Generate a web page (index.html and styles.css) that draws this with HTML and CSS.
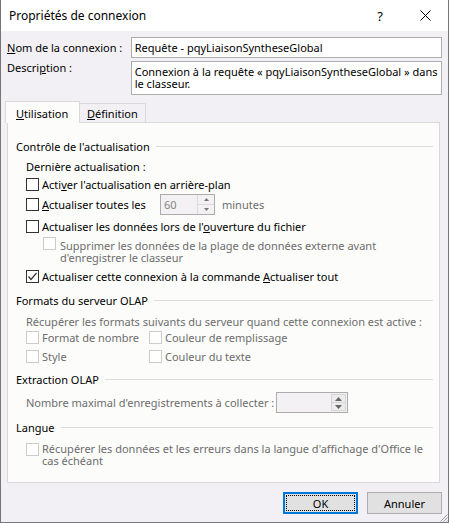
FILE: index.html
```html
<!DOCTYPE html>
<html lang="fr">
<head>
<meta charset="utf-8">
<title>Propriétés de connexion</title>
<link rel="stylesheet" href="styles.css">
</head>
<body>
<div class="window">
  <div class="titlebar">
    <span class="title">Propriétés de connexion</span>
    <span class="help">?</span>
    <span class="close"><svg width="11" height="11" viewBox="0 0 11 11"><path d="M0.5 0.5L10.5 10.5M10.5 0.5L0.5 10.5" stroke="#000" stroke-width="1" fill="none"/></svg></span>
  </div>
  <div class="content">
    <div class="field">
      <span class="flabel"><u>N</u>om de la connexion :</span>
      <div class="input">Requête - pqyLiaisonSyntheseGlobal</div>
    </div>
    <div class="field desc">
      <span class="flabel">Descri<u>p</u>tion :</span>
      <div class="input textarea">Connexion à la requête « pqyLiaisonSyntheseGlobal » dans<br>le classeur.</div>
    </div>
    <div class="tabs">
      <div class="tab active"><u>U</u>tilisation</div>
      <div class="tab inactive"><u>D</u>éfinition</div>
    </div>
    <div class="panel">
      <div class="group-title">Contrôle de l'actualisation</div>
      <div class="sub">Dernière actualisation :</div>
      <div class="cb-row r1"><span class="cb"></span><span>Acti<u>v</u>er l'actualisation en arrière-plan</span></div>
      <div class="cb-row r2"><span class="cb"></span><span class="w-toutes"><u>A</u>ctualiser toutes les</span>
        <div class="spin s60"><span class="spin-val">60</span><span class="spin-btns"><span><svg width="5" height="3" viewBox="0 0 5 3"><path d="M0 3L2.5 0L5 3Z" fill="#777"/></svg></span><span><svg width="5" height="3" viewBox="0 0 5 3"><path d="M0 0L2.5 3L5 0Z" fill="#777"/></svg></span></span></div>
        <span class="dim unit">minutes</span></div>
      <div class="cb-row r3"><span class="cb"></span><span>Actualiser les données lors de l'<u>o</u>uverture du fichier</span></div>
      <div class="cb-row multi r4"><span class="cb disabled"></span><span class="dim mtext">Supprimer les données de la plage de données externe avant<br>d'enregistrer le classeur</span></div>
      <div class="cb-row r5"><span class="cb"><svg width="11" height="11" viewBox="0 0 11 11"><path d="M1.5 5.5L4 8.5L9.5 2" stroke="#333" stroke-width="1.2" fill="none"/></svg></span><span>Actualiser cette connexion à la commande <u>A</u>ctualiser tout</span></div>

      <div class="group-title g2">Formats du serveur OLAP</div>
      <div class="sub dim olap-text">Récupérer les formats suivants du serveur quand cette connexion est active :</div>
      <div class="olap-grid">
        <div class="cb-row"><span class="cb disabled"></span><span class="dim">Format de nombre</span></div>
        <div class="cb-row"><span class="cb disabled"></span><span class="dim">Couleur de remplissage</span></div>
        <div class="cb-row o2"><span class="cb disabled"></span><span class="dim">Style</span></div>
        <div class="cb-row o2"><span class="cb disabled"></span><span class="dim">Couleur du texte</span></div>
      </div>

      <div class="group-title g3">Extraction OLAP</div>
      <div class="max-row">
        <span class="dim w-max">Nombre maximal d'enregistrements à collecter :</span>
        <div class="spin s-max"><span class="spin-val"></span><span class="spin-btns framed"><span><svg width="7" height="4" viewBox="0 0 7 4"><path d="M0 4L3.5 0L7 4Z" fill="#666"/></svg></span><span><svg width="7" height="4" viewBox="0 0 7 4"><path d="M0 0L3.5 4L7 0Z" fill="#666"/></svg></span></span></div>
      </div>

      <div class="group-title g4">Langue</div>
      <div class="cb-row multi lang"><span class="cb disabled"></span><span class="dim">Récupérer les données et les erreurs dans la langue d'affichage d'Office le<br>cas échéant</span></div>
    </div>
    <div class="buttons">
      <button class="btn default"><span class="focus">OK</span></button>
      <button class="btn">Annuler</button>
    </div>
  </div>
  <svg class="grip" width="9" height="9" viewBox="0 0 9 9"><path d="M8.5 1.5L1.5 8.5M8.5 4.5L4.5 8.5M8.5 7.5L7.5 8.5" stroke="#9a9a9a" stroke-width="1" fill="none"/></svg>
</div>
</body>
</html>
```
FILE: styles.css
```css
* { box-sizing: border-box; }
html, body { margin: 0; padding: 0; background: #f2f0f4; }
body {
  font-family: "Noto Sans", "Liberation Sans", sans-serif;
  font-size: 11px;
  color: #000;
}
u { text-decoration: underline; text-underline-offset: 1px; }

.window {
  position: relative;
  width: 449px;
  height: 523px;
  background: #f2f0f4;
  border: 1px solid #767676;
  border-top: none;
}

.titlebar {
  height: 31px;
  background: #fff;
  display: flex;
  align-items: center;
  font-size: 12px;
}
.title { flex: 1; padding-left: 8px; line-height: 16px; }
.help { width: 12px; text-align: center; margin-right: 34px; font-size: 13px; }
.close { width: 11px; height: 11px; margin-right: 17px; display: flex; }

.content { padding: 6px 6px 0 6px; }

.field { display: flex; align-items: center; }
.flabel { width: 124px; line-height: 15px; white-space: nowrap; }
.input {
  width: 312px;
  height: 21px;
  border: 1px solid #adadad;
  background: #fff;
  padding: 0 3px;
  line-height: 19px;
  white-space: nowrap;
}
.desc { margin-top: 3px; align-items: flex-start; }
.desc .flabel { line-height: 14px; }
.textarea { height: 34px; line-height: 12px; padding-top: 4px; }

.tabs {
  display: flex;
  align-items: flex-end;
  height: 21px;
  margin: 6px 0 0 -2px;
}
.tab {
  position: relative;
  border: 1px solid #d9d9d9;
  border-bottom: none;
  line-height: 15px;
  white-space: nowrap;
}
.tab.active {
  width: 75px;
  height: 22px;
  margin-bottom: -1px;
  padding: 4px 0 0 10px;
  background: #fcfcfb;
  z-index: 1;
}
.tab.inactive {
  width: 67px;
  height: 19px;
  margin-left: -1px;
  padding: 2px 0 0 7px;
  background: #f2f0f4;
}

.panel {
  width: 433px;
  height: 361px;
  border: 1px solid #d9d9d9;
  background: #fcfcfb;
  padding: 16px 6px 0 8px;
}

.group-title {
  display: flex;
  align-items: center;
  height: 15px;
  line-height: 15px;
  white-space: nowrap;
}
.group-title::after {
  content: "";
  flex: 1;
  height: 1px;
  background: #dcdcdc;
  margin-left: 6px;
}
.g2 { margin-top: 8px; }
.g3 { margin-top: 7px; }
.g4 { margin-top: 7px; }

.sub { margin: 5px 0 0 10px; height: 15px; line-height: 15px; white-space: nowrap; }
.olap-text { margin-top: 6px; }

.dim { color: #6d6d6d; }

.cb-row {
  display: flex;
  align-items: center;
  height: 17px;
  line-height: 15px;
  margin-left: 10px;
  white-space: nowrap;
}
.cb {
  flex: none;
  width: 13px;
  height: 13px;
  border: 1px solid #333;
  background: #fff;
  margin-right: 3px;
  display: flex;
}
.cb.disabled { border-color: #cccccc; }

.r1 { margin-top: 2px; }
.r2 { margin-top: 1px; height: 21px; }
.r3 { margin-top: 3px; }
.r4 { margin-top: 2px; margin-left: 27px; }
.r4 .cb { margin-right: 4px; }
.r5 { margin-top: 4px; }

.cb-row.multi { height: auto; align-items: flex-start; line-height: 12px; }
.mtext { padding-top: 3px; }
.lang { margin-top: 8px; }

.w-toutes { width: 118px; }
.unit { margin-left: 7px; }

.spin {
  display: flex;
  height: 21px;
  border: 1px solid #acacac;
  background: #f3f1f4;
}
.s60 { width: 55px; }
.s-max { width: 72px; }
.spin-val { flex: 1; padding-left: 3px; line-height: 19px; color: #858585; }
.spin-btns {
  width: 17px;
  display: flex;
  flex-direction: column;
  border-left: 1px solid #dcdcdc;
}
.spin-btns span {
  flex: 1;
  display: flex;
  align-items: center;
  justify-content: center;
}
.spin-btns span + span { border-top: 1px solid #dcdcdc; }
.spin-btns.framed { width: 17px; padding: 1px; border-left: none; }
.spin-btns.framed span { background: #ececec; border: 1px solid #d6d6d6; }
.spin-btns.framed span + span { border-top: none; }

.olap-grid {
  display: grid;
  grid-template-columns: 133px auto;
}
.olap-grid .cb-row:nth-child(2n) { margin-left: 0; }
.olap-grid .o2 { margin-top: 2px; }

.max-row {
  display: flex;
  align-items: center;
  margin: 5px 0 0 10px;
  white-space: nowrap;
}
.w-max { width: 250px; }

.buttons {
  display: flex;
  justify-content: flex-end;
  gap: 9px;
  margin-top: 9px;
}
.btn {
  width: 75px;
  height: 22px;
  padding: 0;
  border: 1px solid #adadad;
  background: #e1e1e1;
  font-family: inherit;
  font-size: 11px;
  color: #000;
  display: flex;
  align-items: center;
  justify-content: center;
}
.btn.default { border: 2px solid #0078d7; padding: 1px; }
.btn.default .focus {
  flex: 1;
  align-self: stretch;
  border: 1px dotted #000;
  display: flex;
  align-items: center;
  justify-content: center;
}

.grip { position: absolute; right: 0; bottom: 0; }
```
